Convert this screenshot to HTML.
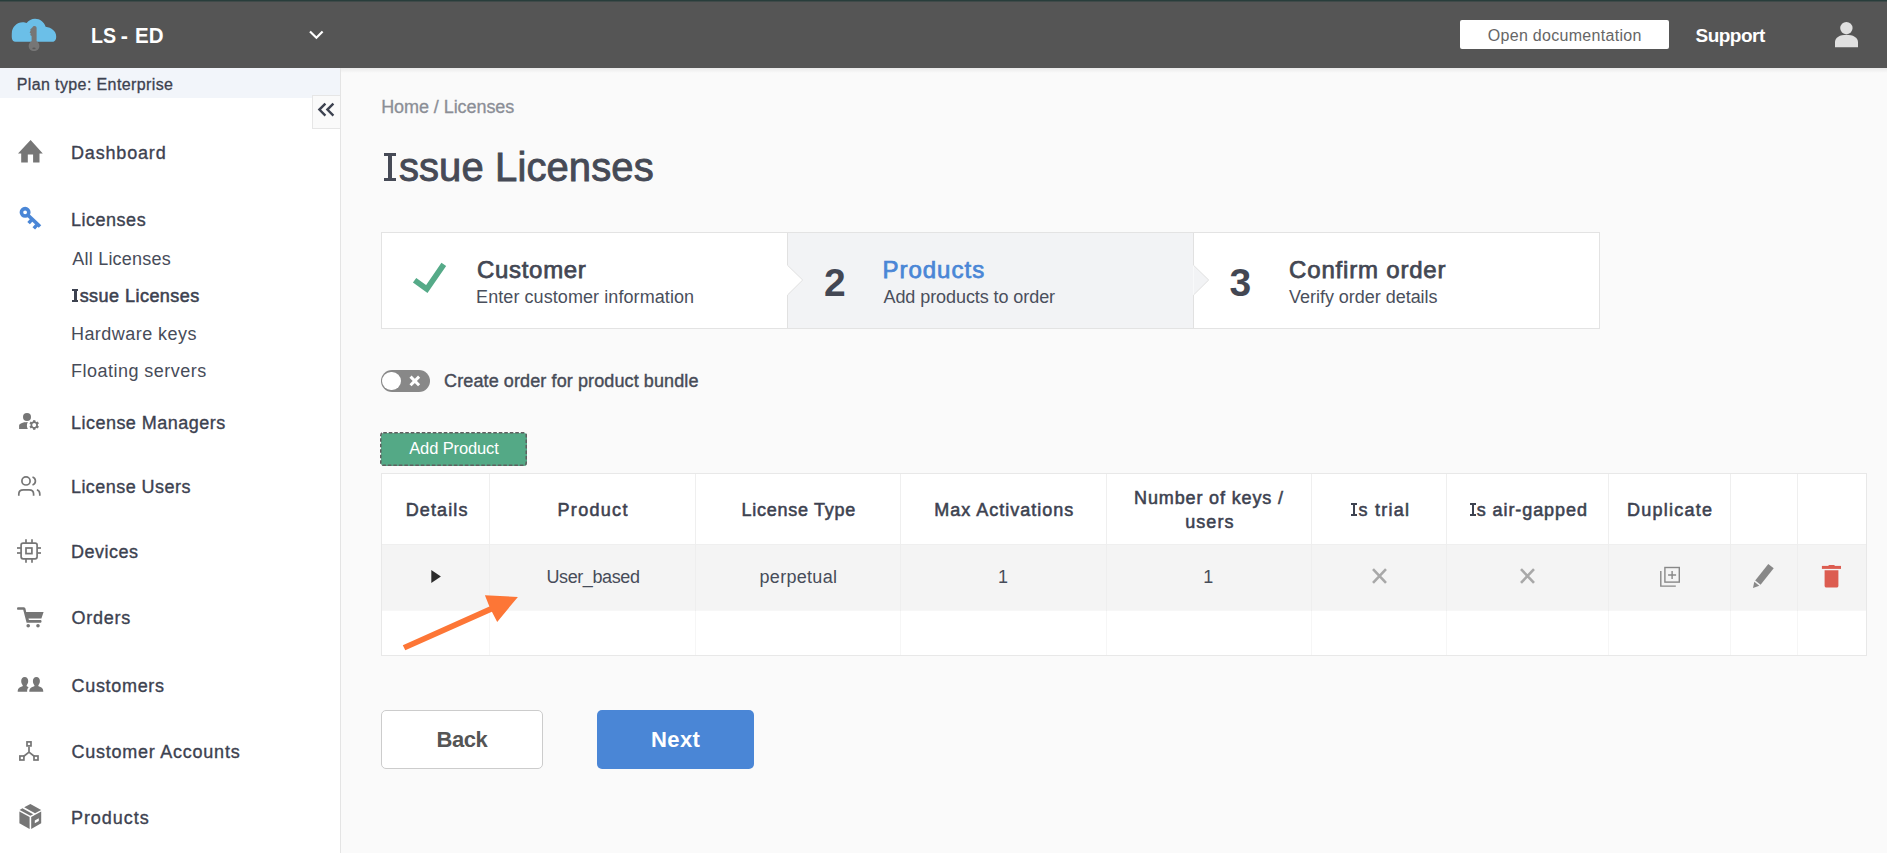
<!DOCTYPE html>
<html>
<head>
<meta charset="utf-8">
<style>
html,body{margin:0;padding:0;}
body{width:1887px;height:853px;overflow:hidden;position:relative;background:#fafafa;font-family:"Liberation Sans",sans-serif;}
.t{position:absolute;white-space:nowrap;line-height:1;}
.abs{position:absolute;}
svg{position:absolute;overflow:visible;}
</style>
</head>
<body>
<!-- header -->
<div class="abs" style="left:0;top:0;width:1887px;height:68px;background:#555555;"></div>
<div class="abs" style="left:0;top:0;width:1887px;height:1px;background:#283d3b;"></div><div class="abs" style="left:0;top:1px;width:1887px;height:1px;background:#3f4a49;"></div>
<!-- logo -->
<svg style="left:0;top:0" width="70" height="68" viewBox="0 0 70 68">
  <path fill="#6bbfe8" d="M15.5 41.8 C11 41.8 11.8 36 11.8 33.5 C11.8 27 17 22.3 22.7 22.3 C24.4 22.3 25.6 22.7 26.6 23.1 C28.6 20.3 31.6 18.7 35 18.7 C40 18.7 44.2 22 45.6 26.8 C51.5 27.5 56.2 31.3 56.2 36.5 C56.2 40.3 54.6 41.8 52.5 41.8 Z"/>
  <path fill="#767676" d="M34.5 26 C35.8 26 36.6 26.8 36.6 28 L36.6 41.3 C38.4 42.2 39.4 44 39.4 46 C39.4 49 37 51 34 51 C31 51 28.7 49 28.7 46 C28.7 44 29.8 42.2 31.6 41.3 L31.6 36 L30.2 35 L30.8 33.6 L29.6 32.6 L30.6 30.8 L30.2 29.4 L32.3 27.5 C32.6 26.6 33.4 26 34.5 26 Z"/>
  <ellipse cx="34" cy="48.3" rx="1.7" ry="0.9" fill="#5a5a5a"/>
</svg>
<svg style="left:0;top:0" width="340" height="68">
  <polyline points="310,31.5 316.4,37.7 322.6,31.5" fill="none" stroke="#ffffff" stroke-width="2.2"/>
</svg>
<div class="abs" style="left:1460px;top:20px;width:209px;height:29px;background:#ffffff;border-radius:2px;"></div>
<svg style="left:1830px;top:18px" width="34" height="34" viewBox="1830 18 34 34">
  <circle cx="1846.4" cy="28.1" r="6.2" fill="#e0e0e0"/>
  <path fill="#e0e0e0" d="M1835 47.2 L1835 42 C1835 37.5 1840 34.7 1846.4 34.7 C1852.8 34.7 1858 37.5 1858 42 L1858 47.2 Z"/>
</svg>

<!-- sidebar -->
<div class="abs" style="left:0;top:68px;width:340px;height:785px;background:#ffffff;"></div>
<div class="abs" style="left:340px;top:68px;width:1px;height:785px;background:#e4e4e4;"></div>
<div class="abs" style="left:0;top:68px;width:340px;height:30px;background:#f2f5fa;"></div>
<div class="abs" style="left:341px;top:68px;width:1546px;height:5px;background:linear-gradient(rgba(0,0,0,0.065),rgba(0,0,0,0));"></div>
<div class="abs" style="left:312px;top:95px;width:27px;height:32px;background:#fafafa;border:1px solid #e6e6e6;border-right:none;"></div>
<svg style="left:300px;top:90px" width="45" height="40" viewBox="300 90 45 40">
  <polyline points="325.4,103.6 319.4,109.6 325.4,115.6" fill="none" stroke="#3d4250" stroke-width="2.4"/>
  <polyline points="333.4,103.6 327.4,109.6 333.4,115.6" fill="none" stroke="#3d4250" stroke-width="2.4"/>
</svg>

<!-- sidebar icons -->
<svg style="left:0;top:120px" width="60" height="733" viewBox="0 120 60 733">
  <!-- home -->
  <path fill="#767676" d="M30.6 140.1 L42.8 153.4 L39.5 153.4 L39.5 162.6 L33.1 162.6 L33.1 154.6 L27.8 154.6 L27.8 162.6 L21.2 162.6 L21.2 153.4 L18 153.4 Z"/>
  <!-- key blue -->
  <g fill="none" stroke="#4a86d6">
    <circle cx="25.1" cy="212.3" r="3.7" stroke-width="3.6"/>
    <line x1="27.8" y1="215" x2="40" y2="226.5" stroke-width="3.6"/>
    <line x1="32.2" y1="219.2" x2="28.6" y2="223.1" stroke-width="3.5"/>
    <line x1="37.4" y1="224.3" x2="33.8" y2="228.3" stroke-width="3.5"/>
  </g>
  <!-- license managers -->
  <circle cx="27" cy="416.9" r="4" fill="#767676"/>
  <path fill="#767676" d="M19.1 429 L19.1 426 C19.1 423.5 22.5 422.2 27.8 422 C26.6 424.5 26.6 426.8 27.8 429 Z"/>
  <g transform="translate(34.2,425)">
    <circle r="2.85" fill="none" stroke="#767676" stroke-width="1.8"/>
    <g fill="#767676">
      <rect x="-1.15" y="-4.8" width="2.3" height="2"/>
      <rect x="-1.15" y="-4.8" width="2.3" height="2" transform="rotate(60)"/>
      <rect x="-1.15" y="-4.8" width="2.3" height="2" transform="rotate(120)"/>
      <rect x="-1.15" y="-4.8" width="2.3" height="2" transform="rotate(180)"/>
      <rect x="-1.15" y="-4.8" width="2.3" height="2" transform="rotate(240)"/>
      <rect x="-1.15" y="-4.8" width="2.3" height="2" transform="rotate(300)"/>
    </g>
  </g>
  <!-- license users -->
  <g fill="none" stroke="#767676" stroke-width="1.7">
    <circle cx="26" cy="480.9" r="4.1"/>
    <path d="M32.5 477 A4.2 4.2 0 0 1 32.5 485"/>
    <path d="M18.8 495.8 L18.8 494 C18.8 491.2 20.6 489.8 23.4 489.8 L29 489.8 C31.8 489.8 33.6 491.2 33.6 494 L33.6 495.8"/>
    <path d="M36.9 489.8 C38.8 490.4 39.8 491.8 39.8 494 L39.8 495.8"/>
  </g>
  <!-- devices chip -->
  <g fill="none" stroke="#767676" stroke-width="1.7">
    <rect x="21.1" y="543.1" width="16" height="15.7" rx="2"/>
    <rect x="26" y="548" width="5.9" height="5.6"/>
    <line x1="26" y1="539.2" x2="26" y2="543"/><line x1="32" y1="539.2" x2="32" y2="543"/>
    <line x1="26" y1="559" x2="26" y2="562.7"/><line x1="32" y1="559" x2="32" y2="562.7"/>
    <line x1="17" y1="548" x2="21" y2="548"/><line x1="17" y1="553" x2="21" y2="553"/>
    <line x1="37.2" y1="548" x2="41" y2="548"/><line x1="37.2" y1="553" x2="41" y2="553"/>
  </g>
  <!-- cart -->
  <g fill="#767676">
    <path d="M17.7 607.2 L23.8 607.2 C24.8 607.2 25.3 608 25.5 608.8 L26.2 612 L43.6 612 L41.4 618.6 L28.5 618.6 L28.9 620.1 L40.8 620.1 C41.8 620.1 41.8 622.7 40.8 622.7 L26.6 622.7 L23.2 609.8 L17.7 609.8 C16.8 609.8 16.8 607.2 17.7 607.2 Z"/>
    <circle cx="28.2" cy="625.7" r="1.8"/>
    <circle cx="38" cy="625.7" r="1.8"/>
  </g>
  <!-- customers -->
  <g fill="#767676">
    <path d="M24.7 676.9 C27 676.9 28.2 678.6 28.2 681 C28.2 683 27.3 684.4 26.6 685.2 L26.8 686.3 C27.5 686.7 28.1 686.9 28.6 687.2 C27.4 688.2 27 690 27.2 691.8 L17.7 691.8 C17.7 689 18.5 687.5 22.6 686.3 L22.8 685.2 C22 684.4 21.2 683 21.2 681 C21.2 678.6 22.4 676.9 24.7 676.9 Z"/>
    <path d="M36.4 676.9 C38.7 676.9 39.9 678.6 39.9 681 C39.9 683 39 684.4 38.3 685.2 L38.5 686.3 C42.5 687.5 43.3 689 43.3 691.8 L29.3 691.8 C29.3 689 30.2 687.5 34.3 686.3 L34.5 685.2 C33.7 684.4 32.9 683 32.9 681 C32.9 678.6 34.1 676.9 36.4 676.9 Z"/>
  </g>
  <!-- customer accounts -->
  <g fill="none" stroke="#767676" stroke-width="1.7">
    <rect x="27" y="741.9" width="4" height="4"/>
    <rect x="19.9" y="756" width="4" height="4"/>
    <rect x="34" y="756" width="4" height="4"/>
    <path d="M29 746.7 L29 752.1 L23.5 756.5 M29 752.1 L34.5 756.5"/>
  </g>
  <!-- products box -->
  <g fill="#767676">
    <path d="M30.4 804 L41.2 809.9 L35 813.3 L24.2 807.3 Z"/>
    <path d="M22.4 808.3 L33.2 814.3 L30.4 815.8 L19.6 809.9 Z"/>
    <path d="M19.4 811.5 L29.6 817.1 L29.6 829.1 L19.4 823.2 Z"/>
    <path d="M41.2 811.5 L31.2 817.1 L31.2 829.1 L41.2 823.2 Z M34.8 820.5 L38.8 818.3 L38.8 821 L34.8 823.2 Z" fill-rule="evenodd"/>
  </g>
</svg>

<!-- stepper -->
<div class="abs" style="left:381px;top:232px;width:1217px;height:95px;border:1px solid #e3e3e3;background:#ffffff;"></div>
<div class="abs" style="left:788px;top:233px;width:405px;height:95px;background:#f2f3f5;"></div>
<svg style="left:780px;top:232px" width="440" height="97" viewBox="780 232 440 97">
  <path d="M787.5 233 L787.5 265.3 L802.7 280 L787.5 295 L787.5 328" fill="#ffffff" stroke="#e1e1e1" stroke-width="1"/>
  <path d="M1193.5 233 L1193.5 265.3 L1208.7 280 L1193.5 295 L1193.5 328" fill="#f2f3f5" stroke="#e1e1e1" stroke-width="1"/>
</svg>
<svg style="left:400px;top:250px" width="60" height="50" viewBox="400 250 60 50">
  <polyline points="414.6,280.3 426.8,289.1 443.8,264.3" fill="none" stroke="#55aa88" stroke-width="5.7"/>
</svg>

<!-- toggle -->
<div class="abs" style="left:381px;top:370px;width:49px;height:22px;border-radius:11px;background:#888888;"></div>
<div class="abs" style="left:382.3px;top:371.7px;width:18.6px;height:18.6px;border-radius:50%;background:#ffffff;"></div>
<svg style="left:405px;top:371px" width="20" height="20" viewBox="405 371 20 20">
  <path d="M410.5 376.6 L419.1 385.2 M419.1 376.6 L410.5 385.2" stroke="#ffffff" stroke-width="3"/>
</svg>

<!-- add product -->
<div class="abs" style="left:380.5px;top:432.5px;width:146px;height:33px;background:#54a986;border-radius:3px;"></div>
<svg style="left:370px;top:425px" width="170" height="50" viewBox="370 425 170 50"><rect x="380.75" y="432.75" width="145.5" height="32.5" rx="2.5" fill="none" stroke="#5f5f5f" stroke-width="1.5" stroke-dasharray="3.6 1.9"/></svg>

<!-- table -->
<div class="abs" style="left:381px;top:473px;width:1484px;height:181px;border:1px solid #e8e8e8;background:#ffffff;"></div>
<div class="abs" style="left:382px;top:544px;width:1484px;height:67px;background:#f4f4f4;border-top:1px solid #efefef;border-bottom:1px solid #f7f7f7;box-sizing:border-box;"></div>
<div class="abs" style="left:489px;top:474px;width:1px;height:70px;background:#efefef;"></div>
<div class="abs" style="left:489px;top:544px;width:1px;height:67px;background:#eeeeee;"></div>
<div class="abs" style="left:489px;top:611px;width:1px;height:44px;background:#f6f6f6;"></div>
<div class="abs" style="left:695px;top:474px;width:1px;height:70px;background:#efefef;"></div>
<div class="abs" style="left:695px;top:544px;width:1px;height:67px;background:#eeeeee;"></div>
<div class="abs" style="left:695px;top:611px;width:1px;height:44px;background:#f6f6f6;"></div>
<div class="abs" style="left:900px;top:474px;width:1px;height:70px;background:#efefef;"></div>
<div class="abs" style="left:900px;top:544px;width:1px;height:67px;background:#eeeeee;"></div>
<div class="abs" style="left:900px;top:611px;width:1px;height:44px;background:#f6f6f6;"></div>
<div class="abs" style="left:1106px;top:474px;width:1px;height:70px;background:#efefef;"></div>
<div class="abs" style="left:1106px;top:544px;width:1px;height:67px;background:#eeeeee;"></div>
<div class="abs" style="left:1106px;top:611px;width:1px;height:44px;background:#f6f6f6;"></div>
<div class="abs" style="left:1311px;top:474px;width:1px;height:70px;background:#efefef;"></div>
<div class="abs" style="left:1311px;top:544px;width:1px;height:67px;background:#eeeeee;"></div>
<div class="abs" style="left:1311px;top:611px;width:1px;height:44px;background:#f6f6f6;"></div>
<div class="abs" style="left:1446px;top:474px;width:1px;height:70px;background:#efefef;"></div>
<div class="abs" style="left:1446px;top:544px;width:1px;height:67px;background:#eeeeee;"></div>
<div class="abs" style="left:1446px;top:611px;width:1px;height:44px;background:#f6f6f6;"></div>
<div class="abs" style="left:1608px;top:474px;width:1px;height:70px;background:#efefef;"></div>
<div class="abs" style="left:1608px;top:544px;width:1px;height:67px;background:#eeeeee;"></div>
<div class="abs" style="left:1608px;top:611px;width:1px;height:44px;background:#f6f6f6;"></div>
<div class="abs" style="left:1730px;top:474px;width:1px;height:70px;background:#efefef;"></div>
<div class="abs" style="left:1730px;top:544px;width:1px;height:67px;background:#eeeeee;"></div>
<div class="abs" style="left:1730px;top:611px;width:1px;height:44px;background:#f6f6f6;"></div>
<div class="abs" style="left:1797px;top:474px;width:1px;height:70px;background:#efefef;"></div>
<div class="abs" style="left:1797px;top:544px;width:1px;height:67px;background:#eeeeee;"></div>
<div class="abs" style="left:1797px;top:611px;width:1px;height:44px;background:#f6f6f6;"></div>
<svg style="left:380px;top:540px" width="1500" height="120" viewBox="380 540 1500 120">
  <path d="M431.3 570.1 L440.9 576.4 L431.3 583 Z" fill="#2b2b2b"/>
  <path d="M1373 569.2 L1386 582.8 M1386 569.2 L1373 582.8" stroke="#a8a8a8" stroke-width="2.6"/>
  <path d="M1521 569.2 L1534 582.8 M1534 569.2 L1521 582.8" stroke="#a8a8a8" stroke-width="2.6"/>
  <!-- duplicate -->
  <g fill="none" stroke="#888888" stroke-width="1.4">
    <rect x="1664.9" y="567.5" width="14.4" height="14.6"/>
    <path d="M1672.1 571 L1672.1 579 M1668.1 575 L1676.1 575"/>
    <path d="M1660.8 571 L1660.8 586.1 L1675.8 586.1"/>
  </g>
  <!-- pencil -->
  <path fill="#888888" d="M1768.3 564 L1773.7 568.3 L1760.6 584.7 L1755.2 580.4 Z"/>
  <path fill="#888888" d="M1754.3 581.7 L1759.3 585.7 L1753 587.9 Z"/>
  <!-- trash -->
  <g fill="#dc5c50">
    <rect x="1821.9" y="565.9" width="19.1" height="3"/>
    <rect x="1828.4" y="564.9" width="6.4" height="2" rx="1"/>
    <path d="M1824.6 570.3 L1838.4 570.3 L1838.4 585.8 C1838.4 587 1837.6 587.6 1836.6 587.6 L1826.4 587.6 C1825.4 587.6 1824.6 587 1824.6 585.8 Z"/>
  </g>
  <!-- orange arrow -->
  <path fill="#fd7636" d="M405.3 650.3 L402.8 645.3 L489.4 606.5 L484.9 595.3 L517.9 596.9 L497.2 621.9 L491.9 611.7 Z"/>
</svg>

<!-- buttons -->
<div class="abs" style="left:381px;top:710px;width:160px;height:57px;border:1px solid #cccccc;border-radius:5px;background:#ffffff;"></div>
<div class="abs" style="left:597px;top:710px;width:157px;height:59px;border-radius:5px;background:#4a86d6;"></div>

<div class="t" style="left:91.02px;top:26px;font-size:21.5px;color:#ffffff;font-weight:bold;transform:scaleX(0.9144);transform-origin:0 0;">LS</div>
<div class="t" style="left:120.64px;top:26px;font-size:21.5px;color:#ffffff;font-weight:bold;">-</div>
<div class="t" style="left:134.57px;top:26px;font-size:21.5px;color:#ffffff;font-weight:bold;transform:scaleX(0.9520);transform-origin:0 0;">ED</div>
<div class="t" style="left:1487.78px;top:28px;font-size:16px;color:#666666;letter-spacing:0.300px;">Open documentation</div>
<div class="t" style="left:1695.53px;top:26px;font-size:19px;color:#ffffff;font-weight:bold;letter-spacing:-0.518px;">Support</div>
<div class="t" style="left:16.72px;top:77px;font-size:16px;color:#3d4250;letter-spacing:0.386px;-webkit-text-stroke:0.3px #3d4250;">Plan type: Enterprise</div>
<div class="t" style="left:70.96px;top:144px;font-size:18px;color:#3d4250;letter-spacing:0.836px;-webkit-text-stroke:0.35px #3d4250;">Dashboard</div>
<div class="t" style="left:70.96px;top:211px;font-size:18px;color:#3d4250;letter-spacing:0.523px;-webkit-text-stroke:0.35px #3d4250;">Licenses</div>
<div class="t" style="left:72.31px;top:250px;font-size:18px;color:#474c59;letter-spacing:0.217px;">All Licenses</div>
<div class="abs" style="left:72.40px;top:289.00px;width:5.90px;height:1.90px;background:#3d4250;"></div>
<div class="abs" style="left:72.40px;top:300.10px;width:5.90px;height:1.90px;background:#3d4250;"></div>
<div class="abs" style="left:74.05px;top:289.00px;width:2.60px;height:13.00px;background:#3d4250;"></div>
<div class="t" style="left:79.66px;top:287px;font-size:18px;color:#3d4250;letter-spacing:0.462px;-webkit-text-stroke:0.55px #3d4250;">ssue Licenses</div>
<div class="t" style="left:70.96px;top:325px;font-size:18px;color:#474c59;letter-spacing:0.451px;">Hardware keys</div>
<div class="t" style="left:70.96px;top:362px;font-size:18px;color:#474c59;letter-spacing:0.487px;">Floating servers</div>
<div class="t" style="left:70.96px;top:414px;font-size:18px;color:#3d4250;letter-spacing:0.481px;-webkit-text-stroke:0.35px #3d4250;">License Managers</div>
<div class="t" style="left:70.96px;top:478px;font-size:18px;color:#3d4250;letter-spacing:0.453px;-webkit-text-stroke:0.35px #3d4250;">License Users</div>
<div class="t" style="left:70.96px;top:543px;font-size:18px;color:#3d4250;letter-spacing:0.513px;-webkit-text-stroke:0.35px #3d4250;">Devices</div>
<div class="t" style="left:71.59px;top:609px;font-size:18px;color:#3d4250;letter-spacing:0.710px;-webkit-text-stroke:0.35px #3d4250;">Orders</div>
<div class="t" style="left:71.50px;top:677px;font-size:18px;color:#3d4250;letter-spacing:0.688px;-webkit-text-stroke:0.35px #3d4250;">Customers</div>
<div class="t" style="left:71.50px;top:743px;font-size:18px;color:#3d4250;letter-spacing:0.754px;-webkit-text-stroke:0.35px #3d4250;">Customer Accounts</div>
<div class="t" style="left:70.96px;top:809px;font-size:18px;color:#3d4250;letter-spacing:0.951px;-webkit-text-stroke:0.35px #3d4250;">Products</div>
<div class="t" style="left:381.16px;top:98px;font-size:18px;color:#8b8e96;letter-spacing:-0.066px;-webkit-text-stroke:0.3px #8b8e96;">Home / Licenses</div>
<div class="abs" style="left:383.70px;top:152.90px;width:12.20px;height:3.40px;background:#464a56;"></div>
<div class="abs" style="left:383.70px;top:177.60px;width:12.20px;height:3.40px;background:#464a56;"></div>
<div class="abs" style="left:387.80px;top:152.90px;width:4.00px;height:28.10px;background:#464a56;"></div>
<div class="t" style="left:398.90px;top:147px;font-size:40px;color:#464a56;letter-spacing:0.108px;-webkit-text-stroke:0.9px #464a56;">ssue Licenses</div>
<div class="t" style="left:477.00px;top:258px;font-size:24px;color:#434753;letter-spacing:0.691px;-webkit-text-stroke:0.75px #434753;">Customer</div>
<div class="t" style="left:476.06px;top:288px;font-size:18px;color:#4a4f5c;letter-spacing:0.077px;">Enter customer information</div>
<div class="t" style="left:824.03px;top:263px;font-size:39px;color:#434753;font-weight:bold;">2</div>
<div class="t" style="left:882.38px;top:258px;font-size:24px;color:#4a86d6;letter-spacing:1.011px;-webkit-text-stroke:0.75px #4a86d6;">Products</div>
<div class="t" style="left:883.51px;top:288px;font-size:18px;color:#4a4f5c;letter-spacing:-0.076px;">Add products to order</div>
<div class="t" style="left:1229.62px;top:263px;font-size:39px;color:#434753;font-weight:bold;">3</div>
<div class="t" style="left:1289.10px;top:258px;font-size:24px;color:#434753;letter-spacing:0.810px;-webkit-text-stroke:0.75px #434753;">Confirm order</div>
<div class="t" style="left:1289.01px;top:288px;font-size:18px;color:#4a4f5c;letter-spacing:-0.027px;">Verify order details</div>
<div class="t" style="left:444.10px;top:372px;font-size:18px;color:#474b57;letter-spacing:0.107px;-webkit-text-stroke:0.4px #474b57;">Create order for product bundle</div>
<div class="t" style="left:409.22px;top:440px;font-size:16.5px;color:#ffffff;letter-spacing:-0.128px;">Add Product</div>
<div class="t" style="left:405.66px;top:501px;font-size:18px;color:#3d4250;letter-spacing:1.130px;-webkit-text-stroke:0.55px #3d4250;">Details</div>
<div class="t" style="left:557.56px;top:501px;font-size:18px;color:#3d4250;letter-spacing:1.303px;-webkit-text-stroke:0.55px #3d4250;">Product</div>
<div class="t" style="left:741.46px;top:501px;font-size:18px;color:#3d4250;letter-spacing:0.736px;-webkit-text-stroke:0.55px #3d4250;">License Type</div>
<div class="t" style="left:934.26px;top:501px;font-size:18px;color:#3d4250;letter-spacing:0.997px;-webkit-text-stroke:0.55px #3d4250;">Max Activations</div>
<div class="t" style="left:1134.06px;top:489px;font-size:18px;color:#3d4250;letter-spacing:0.863px;-webkit-text-stroke:0.55px #3d4250;">Number of keys /</div>
<div class="t" style="left:1185.23px;top:513px;font-size:18px;color:#3d4250;letter-spacing:1.072px;-webkit-text-stroke:0.55px #3d4250;">users</div>
<div class="abs" style="left:1351.10px;top:503.00px;width:6.00px;height:1.90px;background:#3d4250;"></div>
<div class="abs" style="left:1351.10px;top:514.10px;width:6.00px;height:1.90px;background:#3d4250;"></div>
<div class="abs" style="left:1352.75px;top:503.00px;width:2.70px;height:13.00px;background:#3d4250;"></div>
<div class="t" style="left:1358.56px;top:501px;font-size:18px;color:#3d4250;letter-spacing:1.230px;-webkit-text-stroke:0.55px #3d4250;">s trial</div>
<div class="abs" style="left:1469.80px;top:503.00px;width:6.10px;height:1.90px;background:#3d4250;"></div>
<div class="abs" style="left:1469.80px;top:514.10px;width:6.10px;height:1.90px;background:#3d4250;"></div>
<div class="abs" style="left:1471.50px;top:503.00px;width:2.70px;height:13.00px;background:#3d4250;"></div>
<div class="t" style="left:1476.66px;top:501px;font-size:18px;color:#3d4250;letter-spacing:0.930px;-webkit-text-stroke:0.55px #3d4250;">s air-gapped</div>
<div class="t" style="left:1626.96px;top:501px;font-size:18px;color:#3d4250;letter-spacing:1.261px;-webkit-text-stroke:0.55px #3d4250;">Duplicate</div>
<div class="t" style="left:546.45px;top:568px;font-size:18px;color:#474c59;letter-spacing:-0.400px;">User_based</div>
<div class="t" style="left:759.53px;top:568px;font-size:18px;color:#474c59;letter-spacing:0.297px;">perpetual</div>
<div class="t" style="left:997.95px;top:568px;font-size:18px;color:#474c59;">1</div>
<div class="t" style="left:1203.15px;top:568px;font-size:18px;color:#474c59;">1</div>
<div class="t" style="left:436.57px;top:729px;font-size:22px;color:#555555;font-weight:bold;letter-spacing:-0.450px;">Back</div>
<div class="t" style="left:651.07px;top:729px;font-size:22px;color:#ffffff;font-weight:bold;letter-spacing:0.373px;">Next</div>
</body>
</html>
